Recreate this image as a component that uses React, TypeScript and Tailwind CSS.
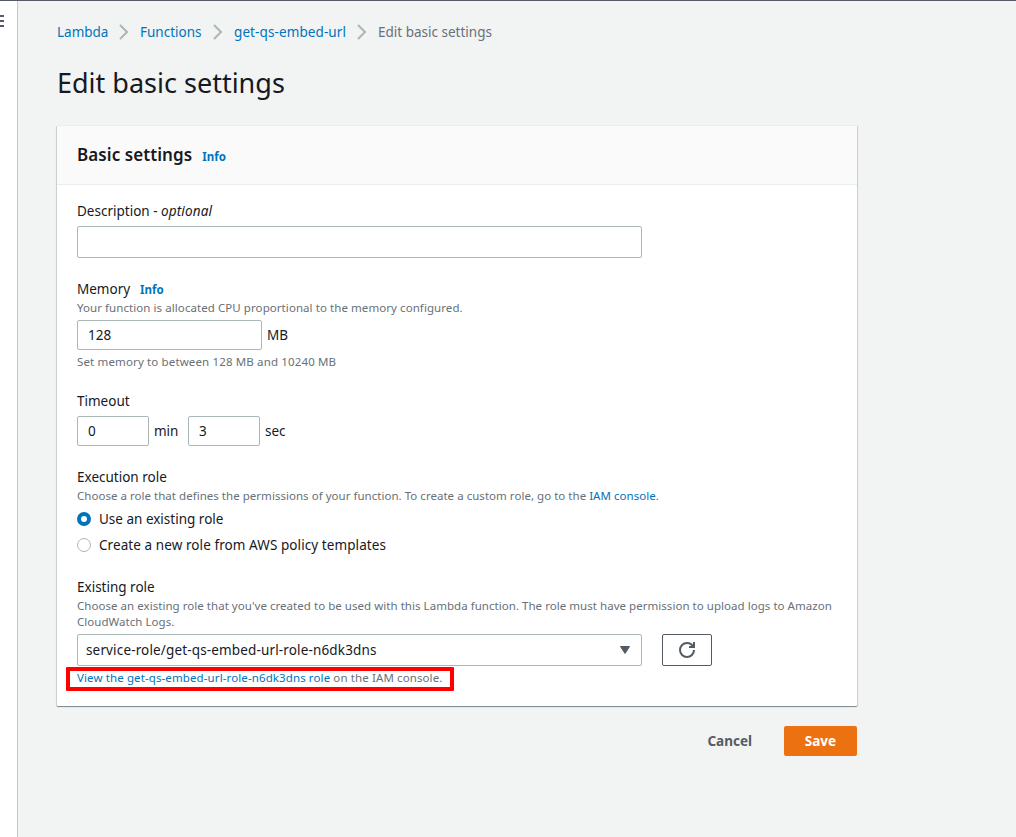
import React from "react";

function Chevron() {
  return (
    <svg width="10" height="16" viewBox="0 0 10 16" fill="none" stroke="#aab7b8" strokeWidth="2" className="shrink-0">
      <path d="M1 1l7 7-7 7" />
    </svg>
  );
}

function Label({ children }: { children: React.ReactNode }) {
  return <div className="flex h-[22px] items-center whitespace-pre text-[13.5px] leading-[22px]">{children}</div>;
}

function Hint({ children, className = "tracking-[0.07px]" }: { children: React.ReactNode; className?: string }) {
  return <div className={"text-[11.5px] leading-4 whitespace-nowrap text-[#687078] " + className}>{children}</div>;
}

const field = "rounded-[2px] border border-[#aab7b8] bg-white text-[13.5px] outline-none";

export default function App() {
  return (
    <div className="flex h-[837px] w-[1016px] flex-col overflow-hidden bg-[#f2f3f3] font-['Noto_Sans',sans-serif] text-[13.5px] text-[#16191f]">
      <div className="h-px shrink-0 bg-[#545b64]" />
      <div className="flex min-h-0 flex-1">
        <aside className="w-[18px] shrink-0 border-r border-[#c4c8ca] bg-white pt-[14px]">
          <svg width="4" height="12" viewBox="0 0 4 12" fill="#545b64">
            <path d="M0 0h4v2H0zM0 5h4v2H0zM0 10h4v2H0z" />
          </svg>
        </aside>
        <main className="ml-[39px] w-[800px]">
          <nav className="mt-5 flex h-[22px] items-center leading-[22px] whitespace-nowrap text-[#0073bb]">
            <a className="w-[62px]">Lambda</a>
            <Chevron />
            <a className="ml-[11px] w-[73px]">Functions</a>
            <Chevron />
            <a className="ml-[11px] w-[123px] tracking-[0.1px]">get-qs-embed-url</a>
            <Chevron />
            <span className="ml-[11px] text-[#687078]">Edit basic settings</span>
          </nav>
          <h1 className="mt-[22px] h-9 text-[27px] leading-9">Edit basic settings</h1>

          <section className="mt-6 h-[581px] rounded-[1px] border-t border-[#eaeded] bg-white shadow-[0_1px_1px_0_rgba(0,28,36,0.3),1px_1px_1px_0_rgba(0,28,36,0.15),-1px_1px_1px_0_rgba(0,28,36,0.15)]">
            <header className="flex h-[59px] items-center border-b border-[#eaeded] bg-[#fafafa] px-5">
              <h2 className="text-[17px] font-semibold tracking-[0.08px]">Basic settings</h2>
              <a className="mt-1 ml-[10px] text-[11.5px] font-bold text-[#0073bb]">Info</a>
            </header>
            <div className="px-5 pt-[15px]">
              <Label>Description - <i className="tracking-[0.15px]">optional</i></Label>
              <input className={field + " mt-1 block h-8 w-[565px]"} />

              <div className="mt-5">
                <Label>
                  Memory<a className="mt-px ml-[10px] text-[11.5px] font-bold text-[#0073bb]">Info</a>
                </Label>
                <Hint>Your function is allocated CPU proportional to the memory configured.</Hint>
                <div className="mt-1 flex h-[30px] items-center leading-[22px]">
                  <input defaultValue="128" className={field + " h-[30px] w-[185px] px-[10px]"} />
                  <span className="ml-[5px]">MB</span>
                </div>
                <div className="mt-1"><Hint className="tracking-[0.14px]">Set memory to between 128 MB and 10240 MB</Hint></div>
              </div>

              <div className="mt-5">
                <Label>Timeout</Label>
                <div className="mt-1 flex h-[30px] items-center leading-[22px]">
                  <input defaultValue="0" className={field + " h-[30px] w-[72px] px-[10px]"} />
                  <span className="ml-[5px] w-[34px]">min</span>
                  <input defaultValue="3" className={field + " h-[30px] w-[72px] px-[10px]"} />
                  <span className="ml-[5px]">sec</span>
                </div>
              </div>

              <div className="mt-5">
                <Label>Execution role</Label>
                <Hint className="tracking-[0.03px]">Choose a role that defines the permissions of your function. To create a custom role, go to the <a className="text-[#0073bb]">IAM console</a>.</Hint>
                <label className="mt-1 flex h-[22px] items-center gap-2 leading-[22px]">
                  <span className="size-[14px] rounded-full border-[4px] border-[#0073bb] bg-white" />
                  <span>Use an existing role</span>
                </label>
                <label className="mt-1 flex h-[22px] items-center gap-2 leading-[22px]">
                  <span className="size-[14px] rounded-full border border-[#aab7b8] bg-white" />
                  <span className="tracking-[0.08px]">Create a new role from AWS policy templates</span>
                </label>
              </div>

              <div className="mt-5">
                <Label>Existing role</Label>
                <Hint className="tracking-[0.04px]">
                  Choose an existing role that you've created to be used with this Lambda function. The role must have permission to upload logs to Amazon
                  <br />
                  CloudWatch Logs.
                </Hint>
                <div className="mt-1 flex gap-5">
                  <div className={field + " flex h-8 w-[565px] items-center justify-between pr-[11px] pl-2 leading-[22px]"}>
                    <span className="tracking-[0.15px]">service-role/get-qs-embed-url-role-n6dk3dns</span>
                    <svg width="10" height="8" viewBox="0 0 10 8" fill="#545b64" stroke="#545b64" strokeLinejoin="round">
                      <path d="M.5.5h9L5 7.5z" />
                    </svg>
                  </div>
                  <button className="flex h-8 w-[50px] items-center justify-center rounded-[2px] border border-[#545b64] bg-white">
                    <svg width="16" height="16" viewBox="0 0 16 16" fill="none" stroke="#545b64" strokeWidth="2">
                      <path d="M10 5h5V0" />
                      <path d="M15 8a7 7 0 1 1-7-7c2.500 0 4.800 1.200 6 3.500" />
                    </svg>
                  </button>
                </div>
                <div className="relative mt-1">
                  <Hint className="tracking-[0.11px]"><a className="text-[#0073bb]">View the get-qs-embed-url-role-n6dk3dns role</a> on the IAM console.</Hint>
                  <div className="absolute -top-[3px] -left-[11px] h-6 w-[388px] rounded-[1px] border-4 border-[#ff0000]" />
                </div>
              </div>
            </div>
          </section>

          <div className="mt-5 flex h-[30px] items-center justify-end leading-[22px] font-bold">
            <button className="mr-8 text-[#545b64]">Cancel</button>
            <button className="h-[30px] w-[73px] rounded-[2px] bg-[#ec7211] text-white">Save</button>
          </div>
        </main>
      </div>
    </div>
  );
}
